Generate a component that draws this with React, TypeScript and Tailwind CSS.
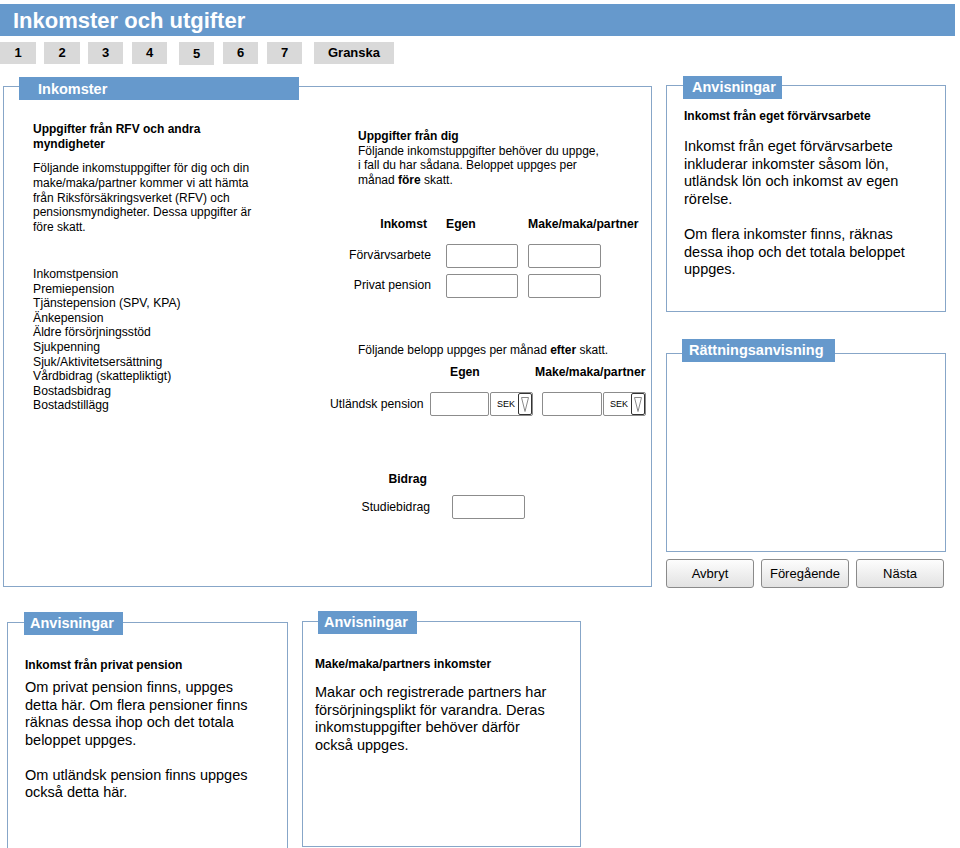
import type { ReactNode } from 'react';

const tabs = [
    { label: '1', cls: 'w-[36px]' },
    { label: '2', cls: 'ml-[8px] w-[36px]' },
    { label: '3', cls: 'ml-[8px] w-[35px]' },
    { label: '4', cls: 'ml-[9px] w-[35px]' },
    { label: '5', cls: 'ml-[12px] w-[35px] h-[23px] bg-[#939393]', active: true },
    { label: '6', cls: 'ml-[9px] w-[35px]' },
    { label: '7', cls: 'ml-[9px] w-[35px]' },
    { label: 'Granska', cls: 'ml-[12px] w-[80px]' },
];

const pensions = [
    'Inkomstpension',
    'Premiepension',
    'Tjänstepension (SPV, KPA)',
    'Änkepension',
    'Äldre försörjningsstöd',
    'Sjukpenning',
    'Sjuk/Aktivitetsersättning',
    'Vårdbidrag (skattepliktigt)',
    'Bostadsbidrag',
    'Bostadstillägg',
];

// Box with a blue title tab laid over its top border
function Panel({ title, titleClass, boxClass, children }: { title: string; titleClass: string; boxClass: string; children?: ReactNode }) {
    return (
        <div className="flex flex-col">
            <div className={`relative z-10 h-[23px] bg-[#6699cc] text-[14.5px] font-bold leading-[23px] text-white ${titleClass}`}>
                {title}
            </div>
            <div className={`border border-[#87a6c8] bg-white ${boxClass}`}>{children}</div>
        </div>
    );
}

function Field({ cls }: { cls: string }) {
    return <div className={`h-[24px] rounded-[2px] border border-[#8c8c8c] bg-white ${cls}`} />;
}

function CurrencySelect() {
    return (
        <div className="ml-[1px] flex h-[24px] w-[43px] items-center rounded-[2px] border border-[#8c8c8c] bg-white">
            <span className="flex-1 pl-[6px] text-[9px] leading-none">SEK</span>
            <span className="flex h-full w-[14px] items-center justify-center rounded-[2px] border-[1.5px] border-[#333]">
                <svg width="8" height="17" viewBox="0 0 8 17">
                    <path d="M0.5 1.5 L7.5 1.5 L4 15.5 Z" fill="none" stroke="#8a8a8a" strokeWidth="1" />
                </svg>
            </span>
        </div>
    );
}

export default function App() {
    return (
        <div className="h-[848px] w-[960px] overflow-hidden bg-white font-['Liberation_Sans',Arial,sans-serif] text-black">
            {/* Page header */}
            <div className="mt-[4px] flex h-[32px] w-[955px] items-center bg-[#6699cc] pl-[13px]">
                <h1 className="text-[22px] font-bold text-white">Inkomster och utgifter</h1>
            </div>

            {/* Step tabs */}
            <div className="mt-[6px] flex items-start">
                {tabs.map((t) => (
                    <div
                        key={t.label}
                        className={`flex h-[22px] items-center justify-center bg-[#d9d9d9] text-[13px] font-bold ${t.cls}`}
                    >
                        {t.label}
                    </div>
                ))}
            </div>

            <div className="mt-[11px] flex items-start">
                {/* Inkomster main panel */}
                <div className="ml-[3px] w-[649px] pt-[1px]">
                    <Panel title="Inkomster" titleClass="ml-[16px] w-[280px] h-[22px] leading-[24px] pl-[19px]" boxClass="-mt-[14px] h-[501px]">
                        <div className="flex items-start pl-[29px] pt-[35px]">
                            <div className="w-[297px] shrink-0">
                                <h3 className="text-[12px] font-bold leading-[15px]">
                                    Uppgifter från RFV och andra
                                    <br />
                                    myndigheter
                                </h3>
                                <p className="mt-[9px] whitespace-nowrap text-[12px] leading-[14.8px]">
                                    Följande inkomstuppgifter för dig och din
                                    <br />
                                    make/maka/partner kommer vi att hämta
                                    <br />
                                    från Riksförsäkringsverket (RFV) och
                                    <br />
                                    pensionsmyndigheter. Dessa uppgifter är
                                    <br />
                                    före skatt.
                                </p>
                                <ul className="mt-[32px] text-[12.2px] leading-[14.6px]">
                                    {pensions.map((p) => (
                                        <li key={p}>{p}</li>
                                    ))}
                                </ul>
                            </div>

                            <div className="pt-[6.5px]">
                                <div className="ml-[28px] whitespace-nowrap">
                                    <h3 className="text-[12px] font-bold leading-[15px]">Uppgifter från dig</h3>
                                    <p className="text-[12px] leading-[14.7px]">
                                        Följande inkomstuppgifter behöver du uppge,
                                        <br />
                                        i fall du har sådana. Beloppet uppges per
                                        <br />
                                        månad <b>före</b> skatt.
                                    </p>
                                </div>

                                <div className="mt-[29px] text-[12.2px]">
                                    <div className="flex h-[15px] items-center font-bold">
                                        <span className="w-[101px] pr-[4px] text-right">Inkomst</span>
                                        <span className="ml-[15px] w-[82px]">Egen</span>
                                        <span>Make/maka/partner</span>
                                    </div>
                                    <div className="mt-[12.5px] flex h-[23px] items-center">
                                        <span className="w-[101px] text-right">Förvärvsarbete</span>
                                        <Field cls="ml-[15px] w-[72px] h-[23px]" />
                                        <Field cls="ml-[10px] w-[73px] h-[23px]" />
                                    </div>
                                    <div className="mt-[7px] flex h-[23px] items-center">
                                        <span className="w-[101px] text-right">Privat pension</span>
                                        <Field cls="ml-[15px] w-[72px] h-[23px]" />
                                        <Field cls="ml-[10px] w-[73px] h-[23px]" />
                                    </div>
                                </div>

                                <p className="ml-[28px] mt-[45.5px] whitespace-nowrap text-[12px] leading-[15px]">
                                    Följande belopp uppges per månad <b>efter</b> skatt.
                                </p>
                                <div className="mt-[7px] flex h-[15px] items-center text-[12.2px] font-bold">
                                    <span className="ml-[120px] w-[85px]">Egen</span>
                                    <span>Make/maka/partner</span>
                                </div>
                                <div className="mt-[12.5px] flex h-[24px] items-center text-[12.2px]">
                                    <span className="w-[92px] whitespace-nowrap">Utländsk pension</span>
                                    <Field cls="ml-[8px] w-[59px]" />
                                    <CurrencySelect />
                                    <Field cls="ml-[9px] w-[60px]" />
                                    <CurrencySelect />
                                </div>
                            </div>
                        </div>

                        <div className="mt-[55.5px] flex items-start text-[12.2px]">
                            <div className="w-[426px]">
                                <div className="h-[15px] pr-[3px] text-right font-bold leading-[15px]">Bidrag</div>
                                <div className="mt-[8.5px] flex h-[24px] items-center justify-end">
                                    <span>Studiebidrag</span>
                                </div>
                            </div>
                            <Field cls="ml-[22px] mt-[23.5px] w-[73px]" />
                        </div>
                    </Panel>
                </div>

                {/* Right column */}
                <div className="ml-[14px] w-[280px]">
                    <Panel title="Anvisningar" titleClass="ml-[17px] w-[99px] pl-[9px]" boxClass="-mt-[14px] h-[227px] pl-[17px] pt-[23px]">
                        <h4 className="text-[12px] font-bold leading-[14px]">Inkomst från eget förvärvsarbete</h4>
                        <p className="mt-[15px] whitespace-nowrap text-[14.5px] leading-[17.6px]">
                            Inkomst från eget förvärvsarbete
                            <br />
                            inkluderar inkomster såsom lön,
                            <br />
                            utländsk lön och inkomst av egen
                            <br />
                            rörelse.
                        </p>
                        <p className="mt-[17.6px] whitespace-nowrap text-[14.5px] leading-[17.6px]">
                            Om flera inkomster finns, räknas
                            <br />
                            dessa ihop och det totala beloppet
                            <br />
                            uppges.
                        </p>
                    </Panel>

                    <div className="mt-[27px]">
                        <Panel title="Rättningsanvisning" titleClass="ml-[16px] w-[153px] pl-[7px]" boxClass="-mt-[9px] h-[199px]" />
                    </div>

                    <div className="mt-[7px] flex gap-[7px] text-[13px]">
                        {['Avbryt', 'Föregående', 'Nästa'].map((b) => (
                            <button
                                key={b}
                                className="h-[29px] w-[88px] rounded-[3px] border border-[#8a8a8a] bg-gradient-to-b from-[#fdfdfd] to-[#e2e2e2]"
                            >
                                {b}
                            </button>
                        ))}
                    </div>
                </div>
            </div>

            {/* Bottom guidance panels */}
            <div className="mt-[23px] flex items-start">
                <div className="ml-[7px] w-[281px] pt-[1px]">
                    <Panel title="Anvisningar" titleClass="ml-[17px] w-[99px] pl-[6px]" boxClass="-mt-[13px] h-[228px] pl-[17px] pt-[35px]">
                        <h4 className="text-[12px] font-bold leading-[14px]">Inkomst från privat pension</h4>
                        <p className="mt-[7px] whitespace-nowrap text-[14.5px] leading-[17.5px]">
                            Om privat pension finns, uppges
                            <br />
                            detta här. Om flera pensioner finns
                            <br />
                            räknas dessa ihop och det totala
                            <br />
                            beloppet uppges.
                        </p>
                        <p className="mt-[17.5px] whitespace-nowrap text-[14.5px] leading-[17.5px]">
                            Om utländsk pension finns uppges
                            <br />
                            också detta här.
                        </p>
                    </Panel>
                </div>
                <div className="ml-[14px] w-[279px]">
                    <Panel title="Anvisningar" titleClass="ml-[16px] w-[99px] pl-[6px]" boxClass="-mt-[13px] h-[226px] pl-[12px] pt-[35px]">
                        <h4 className="text-[12px] font-bold leading-[14px]">Make/maka/partners inkomster</h4>
                        <p className="mt-[13px] whitespace-nowrap text-[14.5px] leading-[17.6px]">
                            Makar och registrerade partners har
                            <br />
                            försörjningsplikt för varandra. Deras
                            <br />
                            inkomstuppgifter behöver därför
                            <br />
                            också uppges.
                        </p>
                    </Panel>
                </div>
            </div>
        </div>
    );
}
